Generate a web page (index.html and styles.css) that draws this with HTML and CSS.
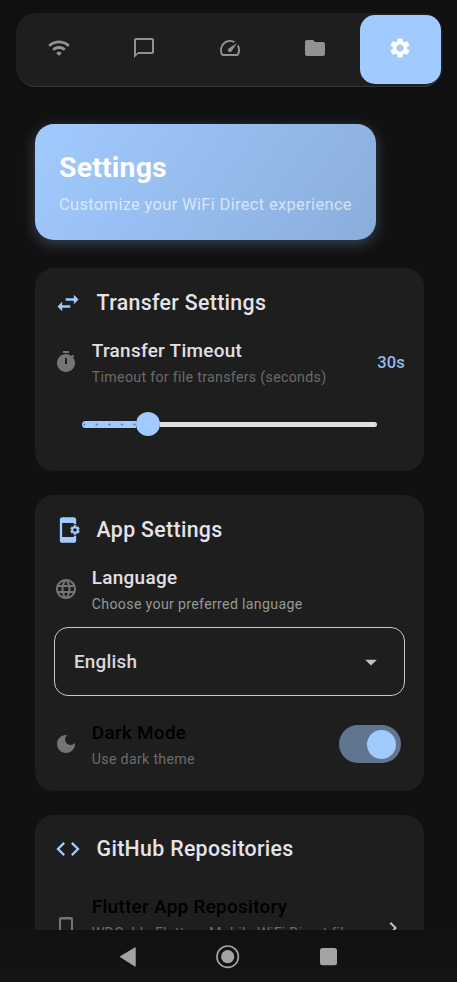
FILE: index.html
```html
<!DOCTYPE html>
<html lang="en">
<head>
<meta charset="utf-8">
<title>Settings</title>
<link rel="stylesheet" href="styles.css">
</head>
<body>
<div class="app">
  <nav class="tabs">
    <a class="tab"><svg class="i24" viewBox="0 0 24 24"><path d="M2.06 10.06c.51.51 1.32.56 1.87.1 4.67-3.84 11.45-3.84 16.13-.01.56.46 1.38.42 1.89-.09.59-.59.55-1.57-.1-2.1-5.71-4.67-13.97-4.67-19.69 0-.65.52-.7 1.5-.1 2.1zm7.76 7.76l1.47 1.47c.39.39 1.02.39 1.41 0l1.47-1.47c.47-.47.37-1.28-.23-1.59-1.22-.63-2.68-.63-3.91 0-.57.31-.68 1.12-.21 1.59zm-3.73-3.73c.49.49 1.26.54 1.83.13 2.44-1.73 5.72-1.73 8.16 0 .57.4 1.34.36 1.83-.13l.01-.01c.6-.6.56-1.62-.13-2.11-3.44-2.49-8.13-2.49-11.58 0-.69.5-.73 1.51-.12 2.12z"/></svg></a>
    <a class="tab"><svg class="i24" viewBox="0 0 24 24"><path d="M20 2H4c-1.1 0-2 .9-2 2v18l4-4h14c1.1 0 2-.9 2-2V4c0-1.1-.9-2-2-2zm0 14H6l-2 2V4h16v12z"/></svg></a>
    <a class="tab"><svg class="i24" viewBox="0 0 24 24"><path d="M20.38 8.57l-1.23 1.85a8 8 0 0 1-.22 7.58H5.07A8 8 0 0 1 15.58 6.85l1.85-1.23A10 10 0 0 0 3.35 19a2 2 0 0 0 1.72 1h13.85a2 2 0 0 0 1.74-1 10 10 0 0 0-.27-10.44zm-9.79 6.84a2 2 0 0 0 2.83 0l5.66-8.49-8.49 5.66a2 2 0 0 0 0 2.83z"/></svg></a>
    <a class="tab"><svg class="i24" viewBox="0 0 24 24"><path d="M10 4H4c-1.1 0-1.99.9-1.99 2L2 18c0 1.1.9 2 2 2h16c1.1 0 2-.9 2-2V8c0-1.1-.9-2-2-2h-8l-2-2z"/></svg></a>
    <a class="tab active"><svg class="i24" viewBox="0 0 24 24"><path d="M19.14 12.94c.04-.3.06-.61.06-.94 0-.32-.02-.64-.07-.94l2.03-1.58c.18-.14.23-.41.12-.61l-1.92-3.32c-.12-.22-.37-.29-.59-.22l-2.39.96c-.5-.38-1.03-.7-1.62-.94l-.36-2.54c-.04-.24-.24-.41-.48-.41h-3.84c-.24 0-.43.17-.47.41l-.36 2.54c-.59.24-1.13.57-1.62.94l-2.39-.96c-.22-.08-.47 0-.59.22L2.74 8.87c-.12.21-.08.47.12.61l2.03 1.58c-.05.3-.09.63-.09.94s.02.64.07.94l-2.03 1.58c-.18.14-.23.41-.12.61l1.92 3.32c.12.22.37.29.59.22l2.39-.96c.5.38 1.03.7 1.62.94l.36 2.54c.05.24.24.41.48.41h3.84c.24 0 .44-.17.47-.41l.36-2.54c.59-.24 1.13-.56 1.62-.94l2.39.96c.22.08.47 0 .59-.22l1.92-3.32c.12-.22.07-.47-.12-.61l-2.01-1.58zM12 15.6c-1.98 0-3.6-1.62-3.6-3.6s1.62-3.6 3.6-3.6 3.6 1.62 3.6 3.6-1.62 3.6-3.6 3.6z"/></svg></a>
  </nav>

  <main class="content">
    <header class="banner">
      <h1>Settings</h1>
      <p>Customize your WiFi Direct experience</p>
    </header>

    <section class="card transfer">
      <div class="card-head">
        <svg class="i28" viewBox="0 0 24 24"><path d="M6.99 11L3 15l3.99 4v-3H14v-2H6.99v-3zM21 9l-3.99-4v3H10v2h7.01v3L21 9z"/></svg>
        <h2>Transfer Settings</h2>
      </div>
      <div class="row">
        <svg class="i24" viewBox="0 0 24 24"><path d="M15 1H9v2h6V1zm4.03 6.39l1.42-1.42c-.43-.51-.9-.99-1.41-1.41l-1.42 1.42C16.07 4.74 14.12 4 12 4c-4.97 0-9 4.03-9 9s4.02 9 9 9 9-4.03 9-9c0-2.12-.74-4.07-1.97-5.61zM13 14h-2V8h2v6z"/></svg>
        <div class="label"><h3>Transfer Timeout</h3><p>Timeout for file transfers (seconds)</p></div>
        <span class="value">30s</span>
      </div>
      <div class="slider"><div class="fill"></div><div class="thumb"></div><div class="rest"></div></div>
    </section>

    <section class="card appset">
      <div class="card-head">
        <svg class="i28" viewBox="0 0 24 24"><path d="M21.81 12.74l-.82-.63v-.22l.8-.63c.16-.12.2-.34.1-.51l-.85-1.48c-.07-.13-.21-.2-.35-.2-.05 0-.1.01-.15.03l-.95.38c-.08-.05-.11-.07-.19-.11l-.15-1.01c-.03-.21-.2-.36-.4-.36h-1.71c-.2 0-.37.15-.4.34l-.14 1.01c-.03.02-.07.03-.1.05l-.09.06-.95-.38c-.05-.02-.1-.03-.15-.03-.14 0-.27.07-.35.2l-.85 1.48c-.1.17-.06.39.1.51l.8.63v.23l-.8.63c-.16.12-.2.34-.1.51l.85 1.48c.07.13.21.2.35.2.05 0 .1-.01.15-.03l.95-.37c.08.05.12.07.2.11l.15 1.01c.03.2.2.34.4.34h1.71c.2 0 .37-.15.4-.34l.15-1.01c.03-.02.07-.03.1-.05l.09-.06.95.38c.05.02.1.03.15.03.14 0 .27-.07.35-.2l.85-1.48c.1-.17.06-.39-.1-.51zM18 13.5c-.83 0-1.5-.67-1.5-1.5s.67-1.5 1.5-1.5 1.5.67 1.5 1.5-.67 1.5-1.5 1.5zM17 18H7V6h10v1h2V3c0-1.1-.9-2-2-2H7c-1.1 0-2 .9-2 2v18c0 1.1.9 2 2 2h10c1.1 0 2-.9 2-2v-4h-2v1z"/></svg>
        <h2>App Settings</h2>
      </div>
      <div class="row">
        <svg class="i24" viewBox="0 0 24 24"><path d="M11.99 2C6.47 2 2 6.48 2 12s4.47 10 9.99 10C17.52 22 22 17.52 22 12S17.52 2 11.99 2zm6.93 6h-2.95c-.32-1.25-.78-2.45-1.38-3.56 1.84.63 3.37 1.91 4.33 3.56zM12 4.04c.83 1.2 1.48 2.53 1.91 3.96h-3.82c.43-1.43 1.08-2.76 1.91-3.96zM4.26 14C4.1 13.36 4 12.69 4 12s.1-1.36.26-2h3.38c-.08.66-.14 1.32-.14 2s.06 1.34.14 2H4.26zm.82 2h2.95c.32 1.25.78 2.45 1.38 3.56-1.84-.63-3.37-1.9-4.33-3.56zm2.95-8H5.08c.96-1.66 2.49-2.93 4.33-3.56C8.81 5.55 8.35 6.75 8.03 8zM12 19.96c-.83-1.2-1.48-2.53-1.91-3.96h3.82c-.43 1.43-1.08 2.76-1.91 3.96zM14.34 14H9.66c-.09-.66-.16-1.32-.16-2s.07-1.35.16-2h4.68c.09.65.16 1.32.16 2s-.07 1.34-.16 2zm.25 5.56c.6-1.11 1.06-2.31 1.38-3.56h2.95c-.96 1.65-2.49 2.93-4.33 3.56zM16.36 14c.08-.66.14-1.32.14-2s-.06-1.34-.14-2h3.38c.16.64.26 1.31.26 2s-.1 1.36-.26 2h-3.38z"/></svg>
        <div class="label bright"><h3>Language</h3><p>Choose your preferred language</p></div>
      </div>
      <div class="select"><span>English</span><svg class="i28" viewBox="0 0 24 24"><path d="M7 10l5 5 5-5z"/></svg></div>
      <div class="row disabled">
        <svg class="i24" viewBox="0 0 24 24"><path d="M12 3c-4.97 0-9 4.03-9 9s4.03 9 9 9 9-4.03 9-9c0-.46-.04-.92-.1-1.36-.98 1.37-2.58 2.26-4.4 2.26-2.98 0-5.4-2.42-5.4-5.4 0-1.81.89-3.42 2.26-4.4-.44-.06-.9-.1-1.36-.1z"/></svg>
        <div class="label"><h3>Dark Mode</h3><p>Use dark theme</p></div>
        <div class="switch"><div class="knob"></div></div>
      </div>
    </section>

    <section class="card repos">
      <div class="card-head">
        <svg class="i28" viewBox="0 0 24 24"><path d="M9.4 16.6L4.8 12l4.6-4.6L8 6l-6 6 6 6 1.4-1.4zm5.2 0l4.6-4.6-4.6-4.6L16 6l6 6-6 6-1.4-1.4z"/></svg>
        <h2>GitHub Repositories</h2>
      </div>
      <div class="row disabled two-line">
        <svg class="i24" viewBox="0 0 24 24"><path d="M17 1H7c-1.1 0-2 .9-2 2v18c0 1.1.9 2 2 2h10c1.1 0 2-.9 2-2V3c0-1.1-.9-2-2-2zm0 18H7V3.6h10V19z"/></svg>
        <div class="label"><h3>Flutter App Repository</h3><p>WDCable Flutter - Mobile WiFi Direct file</p></div>
        <svg class="i24 chevron" viewBox="0 0 24 24"><path d="M8.6 16.6l4.6-4.6-4.6-4.6L10 6l6 6-6 6z"/></svg>
      </div>
    </section>
  </main>

  <footer class="sysbar">
    <svg viewBox="0 0 457 52"><path d="M120.2 26.7L135.2 17.7V36.200z" stroke="#a3a3a3" stroke-width="1" stroke-linejoin="round"/><circle cx="227.700" cy="26.700" r="10.700" fill="none" stroke="#a3a3a3" stroke-width="1.700"/><circle cx="227.700" cy="26.700" r="6.600"/><rect x="320" y="18" width="17" height="17.300" rx="2.500"/></svg>
  </footer>
</div>
</body>
</html>
```
FILE: styles.css
```css
* { box-sizing: border-box; margin: 0; padding: 0; }
body {
  background: #111;
  font-family: Roboto, "Liberation Sans", sans-serif;
  overflow: hidden;
}
svg { display: block; fill: currentColor; flex: none; }
.i24 { width: 24px; height: 24px; }
.i28 { width: 28px; height: 28px; }
.app {
  width: 457px;
  height: 982px;
  display: flex;
  flex-direction: column;
  padding-top: 13px;
}
.tabs {
  flex: none;
  display: flex;
  width: 427px;
  height: 74px;
  margin-left: 16px;
  padding-top: 2px;
  border-radius: 20px;
  background: #1e1e1e;
  border-bottom: 1.500px solid #37373a;
  box-shadow: 0 2px 8px rgba(0, 0, 0, .25);
}
.tab {
  flex: 1;
  height: 69px;
  margin: 0 2px;
  display: flex;
  align-items: center;
  justify-content: center;
  padding-bottom: 3px;
  border-radius: 15px;
  color: #929296;
}
.tab.active { background: #a1caff; color: #fff; }
.content {
  flex: none;
  height: 843px;
  overflow: hidden;
  padding: 37px 33px 0 35px;
}
.banner {
  width: 341px;
  height: 116px;
  padding: 27px 24px 0;
  border-radius: 19px;
  background: linear-gradient(125deg, #a1caff, #8aaedb);
  box-shadow: 0 4px 14px rgba(161, 202, 255, .28);
}
h1 { font-size: 28.400px; line-height: 34px; font-weight: 700; letter-spacing: .2px; color: #fff; white-space: nowrap; }
.banner p {
  margin-top: 9px;
  font-size: 16.500px;
  line-height: 22px;
  letter-spacing: .32px;
  color: rgba(255, 255, 255, .64);
  white-space: nowrap;
}
.card {
  width: 389px;
  padding: 20px 19px 0;
  border-radius: 19px;
  background: #1e1e1e;
}
.transfer { height: 203px; margin-top: 28px; }
.appset { height: 296px; margin-top: 24px; }
.repos { height: 240px; margin-top: 24px; }
.card-head { display: flex; align-items: center; gap: 14.600px; height: 28px; color: #a1caff; }
.card-head svg { position: relative; top: .5px; }
.repos .card-head { height: 27px; }
h2 { padding-top: 1px; font-size: 21.300px; line-height: 28px; font-weight: 500; color: #e5e2e9; letter-spacing: .33px; white-space: nowrap; }
.row { display: flex; align-items: center; height: 52px; margin-top: 20px; color: #757575; }
.row > svg { margin-left: -.4px; }
.label { flex: 1; margin-left: 14.200px; min-width: 0; padding-top: 3px; }
h3 { font-size: 18.900px; line-height: 26px; font-weight: 500; color: #e2e0e6; letter-spacing: .3px; white-space: nowrap; }
.label p { font-size: 14.200px; line-height: 26px; letter-spacing: .31px; color: #6b6b6b; white-space: nowrap; }
.bright p { color: #979797; }
.value { font-size: 16.500px; font-weight: 500; color: #94b9e9; letter-spacing: .2px; }
.slider { display: flex; align-items: center; height: 24px; margin: 24px 28px 0; }
.fill {
  width: 54px;
  height: 7px;
  border-radius: 4px 0 0 4px;
  background: radial-gradient(circle at 2.300px 3.500px, #5f86b8 .8px, transparent 1.400px) 0 0 / 12.600px 7px, #a1caff;
}
.thumb { width: 24px; height: 24px; border-radius: 50%; background: #a1caff; }
.rest {
  flex: 1;
  height: 5px;
  border-radius: 0 3px 3px 0;
  background: radial-gradient(circle at 2px 2.500px, #d2d6d8 .6px, transparent 1.300px) 0 0 / 12.600px 5px, #e0e0e0;
}
.select {
  display: flex;
  align-items: center;
  justify-content: space-between;
  height: 69px;
  margin-top: 12px;
  padding: 0 19px 0 19px;
  border: 1.300px solid #c8c8c8;
  border-radius: 14px;
  color: #c4c4c4;
}
.select span { font-size: 18.900px; font-weight: 500; color: #d9d7dd; letter-spacing: .2px; }
.disabled h3 { color: #000; }
.disabled { margin-top: 22px; }
.disabled .label { padding-top: 4px; }
.switch {
  display: flex;
  align-items: center;
  justify-content: flex-end;
  width: 62px;
  height: 38px;
  margin-right: 4.400px;
  padding-right: 4.500px;
  border-radius: 19px;
  background: #60758f;
}
.knob { width: 29px; height: 29px; border-radius: 50%; background: #a1caff; }
.row.two-line { height: 78px; margin-top: 27px; }
.row.two-line .label { align-self: flex-start; padding-top: 5px; }
.row.two-line p { letter-spacing: .24px; }
.chevron { color: #c4c4c4; }
.sysbar { flex: none; height: 52px; background: linear-gradient(#111, #141414); color: #a3a3a3; }
.sysbar svg { width: 457px; height: 52px; }
```
